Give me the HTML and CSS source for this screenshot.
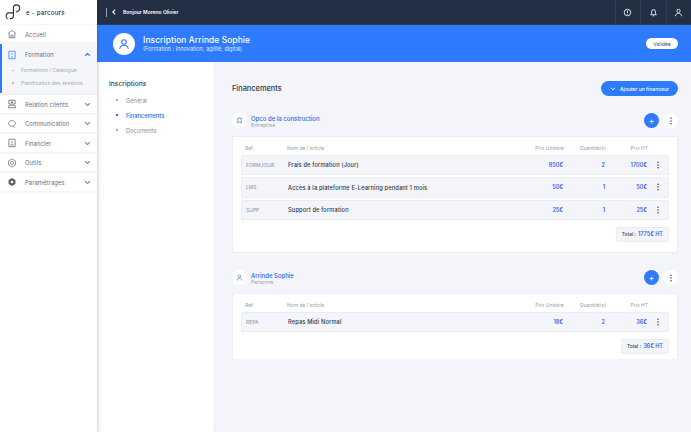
FILE: index.html
```html
<!DOCTYPE html>
<html lang="fr">
<head>
<meta charset="utf-8">
<title>Inscription Arrinde Sophie</title>
<link rel="stylesheet" href="styles.css">
</head>
<body>
<svg class="defs" width="0" height="0" aria-hidden="true">
  <symbol id="chev" viewBox="0 0 10 10"><path d="M2 3.5l3 3 3-3" fill="none" stroke="currentColor" stroke-width="1.5" stroke-linecap="round" stroke-linejoin="round"/></symbol>
  <symbol id="dots" viewBox="0 0 10 10"><circle cx="5" cy="1.5" r="1" fill="currentColor"/><circle cx="5" cy="5" r="1" fill="currentColor"/><circle cx="5" cy="8.5" r="1" fill="currentColor"/></symbol>
  <symbol id="user" viewBox="0 0 16 16"><circle cx="8" cy="5.2" r="3" fill="none" stroke="currentColor" stroke-width="1.4"/><path d="M2.5 14c.4-3 2.6-4.4 5.5-4.4s5.100 1.400 5.500 4.400" fill="none" stroke="currentColor" stroke-width="1.4" stroke-linecap="round"/></symbol>
</svg>
<div class="app">
  <aside class="sidebar">
    <div class="logo">
      <svg class="logo-mark" viewBox="0 0 18 18"><path d="M2.500 16.500c-2-2-1.500-5.500 1-6.500h6V4.500c0-2.200 1.500-3.500 3.500-3.500s3.500 1.500 3.500 3.500-1.500 4-4 4.500" fill="none" stroke="#2a3448" stroke-width="1.300" stroke-linecap="round"/><path d="M9.500 10v3c0 2-1.500 3.500-3.500 3.500" fill="none" stroke="#2a3448" stroke-width="1.300" stroke-linecap="round"/></svg>
      <span class="logo-text">e <b>-</b> parcours</span>
    </div>
    <nav class="nav">
      <a class="nav-row">
        <svg class="nav-icon" viewBox="0 0 16 16"><path d="M2 7l6-5 6 5M3.500 6v8h9V6M6.500 14v-4h3v4" fill="none" stroke="currentColor" stroke-width="1.100"/></svg>
        <span class="nav-label">Accueil</span>
      </a>
      <div class="nav-group">
        <a class="nav-row">
          <svg class="nav-icon blue" viewBox="0 0 16 16"><path d="M3 2h10v12H3z" fill="none" stroke="currentColor" stroke-width="1.200"/><path d="M8 5v3M6.500 11h3" stroke="currentColor" stroke-width="1.200"/></svg>
          <span class="nav-label">Formation</span>
          <svg class="chev up"><use href="#chev"/></svg>
        </a>
        <a class="sub-row">Formations / Catalogue</a>
        <a class="sub-row">Planification des sessions</a>
      </div>
      <a class="nav-row">
        <svg class="nav-icon" viewBox="0 0 16 16"><path d="M3 2h10v6H3zM2 14l1.500-4h9l1.500 4z" fill="none" stroke="currentColor" stroke-width="1.200"/><circle cx="8" cy="5" r="1.500" fill="currentColor"/></svg>
        <span class="nav-label">Relation clients</span>
        <svg class="chev"><use href="#chev"/></svg>
      </a>
      <a class="nav-row">
        <svg class="nav-icon" viewBox="0 0 16 16"><path d="M8 2.500c3.300 0 5.500 2 5.500 4.500s-2.200 4.500-5.500 4.500c-3.300 0-5.500-2-5.500-4.500s2.200-4.500 5.500-4.500zM10 11.500l2.500 2.500" fill="none" stroke="currentColor" stroke-width="1.100"/></svg>
        <span class="nav-label">Communication</span>
        <svg class="chev"><use href="#chev"/></svg>
      </a>
      <a class="nav-row">
        <svg class="nav-icon" viewBox="0 0 16 16"><path d="M3 2h10v12H3z" fill="none" stroke="currentColor" stroke-width="1.200"/><path d="M8 4.500v4M5.500 11h5" stroke="currentColor" stroke-width="1.200"/></svg>
        <span class="nav-label">Financier</span>
        <svg class="chev"><use href="#chev"/></svg>
      </a>
      <a class="nav-row">
        <svg class="nav-icon" viewBox="0 0 16 16"><path d="M8 1.500l5.500 3.200v6.600L8 14.500l-5.500-3.200V4.700z" fill="none" stroke="currentColor" stroke-width="1.100"/><circle cx="8" cy="8" r="2.500" fill="none" stroke="currentColor" stroke-width="1.100"/></svg>
        <span class="nav-label">Outils</span>
        <svg class="chev"><use href="#chev"/></svg>
      </a>
      <a class="nav-row">
        <svg class="nav-icon" viewBox="0 0 16 16"><path d="M8 1.500l5.500 3.200v6.600L8 14.500l-5.500-3.200V4.700z" fill="currentColor"/><circle cx="8" cy="8" r="2" fill="#fff"/></svg>
        <span class="nav-label">Paramétrages</span>
        <svg class="chev"><use href="#chev"/></svg>
      </a>
    </nav>
  </aside>

  <div class="main">
    <header class="topbar">
      <span class="top-rule"></span>
      <svg class="top-back" viewBox="0 0 10 10"><path d="M6.500 2L3.500 5l3 3" fill="none" stroke="currentColor" stroke-width="1.400"/></svg>
      <span class="greeting">Bonjour Moreno Olivier</span>
      <div class="top-icons">
        <span class="top-cell"><svg class="top-icon" viewBox="0 0 16 16"><circle cx="8" cy="8" r="5.800" fill="none" stroke="currentColor" stroke-width="1.500"/><path d="M8 4.500v4.500M8 10.500v1.200" stroke="currentColor" stroke-width="1.500"/></svg></span>
        <span class="top-cell"><svg class="top-icon" viewBox="0 0 16 16"><path d="M3 12h10l-1.500-2V6.500a3.500 3.500 0 0 0-7 0V10zM6.800 14h2.400" fill="none" stroke="currentColor" stroke-width="1.500"/></svg></span>
        <span class="top-cell"><svg class="top-icon"><use href="#user"/></svg></span>
      </div>
    </header>

    <section class="hero">
      <span class="hero-avatar"><svg class="hero-user"><use href="#user"/></svg></span>
      <div class="hero-text">
        <h1>Inscription Arrinde Sophie</h1>
        <p>(Formation : Innovation, agilité, digital)</p>
      </div>
      <span class="status">Validée</span>
    </section>

    <div class="body">
      <aside class="subnav">
        <h2>Inscriptions</h2>
        <a class="subnav-item">Général</a>
        <a class="subnav-item active">Financements</a>
        <a class="subnav-item">Documents</a>
      </aside>

      <main class="content">
        <div class="content-head">
          <h2>Financements</h2>
          <button class="add-btn"><svg class="add-chev"><use href="#chev"/></svg>Ajouter un financeur</button>
        </div>

        <section class="funder">
          <div class="funder-head">
            <span class="round"><svg class="round-icon" viewBox="0 0 16 16"><path d="M4 2.500h8v11l-4-2.500-4 2.500z" fill="none" stroke="currentColor" stroke-width="1.500"/></svg></span>
            <div class="funder-name"><strong>Opco de la construction</strong><span>Entreprise</span></div>
            <button class="plus">+</button>
            <span class="round"><svg class="dots"><use href="#dots"/></svg></span>
          </div>
          <div class="card">
            <div class="cols"><span>Ref.</span><span>Nom de l'article</span><span class="num">Prix Unitaire</span><span class="num">Quantité(s)</span><span class="num">Prix HT</span></div>
            <div class="line"><span class="ref">FORMJOUR</span><span class="name">Frais de formation (Jour)</span><span class="val">850€</span><span class="val">2</span><span class="val">1700€</span><svg class="dots"><use href="#dots"/></svg></div>
            <div class="line"><span class="ref">LMS</span><span class="name">Accès à la plateforme E-Learning pendant 1 mois</span><span class="val">50€</span><span class="val">1</span><span class="val">50€</span><svg class="dots"><use href="#dots"/></svg></div>
            <div class="line"><span class="ref">SUPP</span><span class="name">Support de formation</span><span class="val">25€</span><span class="val">1</span><span class="val">25€</span><svg class="dots"><use href="#dots"/></svg></div>
            <div class="total-wrap"><span class="total">Total : <b>1775€ HT</b></span></div>
          </div>
        </section>

        <section class="funder">
          <div class="funder-head">
            <span class="round"><svg class="round-icon"><use href="#user"/></svg></span>
            <div class="funder-name"><strong>Arrinde Sophie</strong><span>Personne</span></div>
            <button class="plus">+</button>
            <span class="round"><svg class="dots"><use href="#dots"/></svg></span>
          </div>
          <div class="card cut">
            <div class="cols"><span>Ref.</span><span>Nom de l'article</span><span class="num">Prix Unitaire</span><span class="num">Quantité(s)</span><span class="num">Prix HT</span></div>
            <div class="line"><span class="ref">REPA</span><span class="name">Repas Midi Normal</span><span class="val">18€</span><span class="val">2</span><span class="val">36€</span><svg class="dots"><use href="#dots"/></svg></div>
            <div class="total-wrap"><span class="total">Total : <b>36€ HT</b></span></div>
          </div>
        </section>
      </main>
    </div>
  </div>
</div>
</body>
</html>
```

FILE: styles.css
```css
* { box-sizing: border-box; }
html, body { margin: 0; height: 100%; overflow: hidden; }
body { font-family: "Inter", "Lato", sans-serif; color: #2a3448; background: #fff; }
.defs { display: block; height: 0; }
h1, h2, p { margin: 0; font-weight: 400; }
button { font: inherit; border: 0; padding: 0; }

.app { display: flex; width: 691px; height: 432px; }

.sidebar { width: 97px; flex: none; background: #fff; box-shadow: 1px 0 3px rgba(40, 50, 70, .18); position: relative; z-index: 2; }
.logo { height: 24px; display: flex; align-items: center; padding-left: 5px; gap: 5px; }
.logo-mark { width: 16px; height: 16px; flex: none; }
.logo-text { font-size: 6.200px; letter-spacing: .2px; font-weight: 500; color: #2a3448; }
.logo-text b { color: #2e7bff; }
.nav { display: flex; flex-direction: column; }
.nav-row { height: 19.500px; display: flex; align-items: center; padding: 1px 6px 0 7px; border-bottom: 2px solid #f4f4f6; background: #fff; color: #7b818c; }
.nav-row:first-child { border-top: 1px solid #f4f4f6; height: 20px; }
.nav-group { background: #f5f6fa; box-shadow: inset 2px 0 0 #2e7bff; height: 51px; border-bottom: 2px solid #f0f1f4; }
.nav-group .nav-row { background: transparent; border: 0; height: 20px; padding-top: 1px; }
.nav-icon { width: 10px; height: 10px; flex: none; color: #5b6270; margin-right: 8px; }
.nav-icon.blue { color: #2e7bff; }
.nav-label { font-size: 5.800px; letter-spacing: .12px; flex: 1; white-space: nowrap; color: #666c78; }
.chev { width: 7px; height: 7px; color: #7b818c; flex: none; }
.chev.up { transform: rotate(180deg); color: #2e7bff; }
.sub-row { display: flex; align-items: center; height: 13px; padding-left: 21px; font-size: 4.900px; letter-spacing: .08px; color: #a3a8b1; white-space: nowrap; position: relative; margin-top: -.5px; }
.sub-row::before { content: ""; position: absolute; left: 12px; top: 6px; width: 1.500px; height: 1.500px; background: #b6bac2; }

.main { flex: 1; min-width: 0; display: flex; flex-direction: column; }
.topbar { height: 24px; flex: none; background: #232f42; color: #fff; display: flex; align-items: center; padding-left: 9px; }
.top-rule { width: 1px; height: 9px; background: #9aa2ae; }
.top-back { width: 8px; height: 8px; margin-left: 3px; color: #fff; }
.greeting { margin-left: 5px; font-size: 5px; font-weight: 600; }
.top-icons { margin-left: auto; display: flex; height: 100%; }
.top-cell { width: 25.500px; display: flex; align-items: center; justify-content: center; border-left: 1px solid #313d50; }
.top-icon { width: 9px; height: 9px; color: #fff; }

.hero { height: 38px; flex: none; background: #2e7bff; display: flex; align-items: center; padding: 0 13px 0 16px; color: #fff; border-top: 1px solid #2a3a5e; }
.hero-avatar { width: 22px; height: 22px; border-radius: 50%; background: #fff; display: flex; align-items: center; justify-content: center; color: #2e7bff; }
.hero-user { width: 12px; height: 12px; }
.hero-text { margin-left: 8px; flex: 1; }
.hero h1 { font-size: 8.400px; font-weight: 500; line-height: 10px; letter-spacing: .1px; }
.hero p { font-size: 5.500px; line-height: 7px; margin-top: 1px; color: #dce8ff; }
.status { width: 32px; height: 11px; border-radius: 6px; background: #fff; color: #444b58; font-size: 5px; display: flex; align-items: center; justify-content: center; }

.body { flex: 1; display: flex; min-height: 0; }
.subnav { width: 118px; flex: none; background: #fff; padding: 17.500px 0 0 12px; box-shadow: inset 4px 0 4px -3px rgba(40, 50, 70, .08); border-right: 1px solid #ecedf0; }
.subnav h2 { font-size: 6.700px; font-weight: 500; color: #3a4252; margin-bottom: 4px; line-height: 9px; }
.subnav-item { display: flex; align-items: center; height: 15px; padding-left: 17px; font-size: 5.700px; color: #8b909a; position: relative; white-space: nowrap; }
.subnav-item::before { content: ""; position: absolute; left: 7px; top: 6.500px; width: 2px; height: 2px; background: #a8acb4; }
.subnav-item.active { color: #2e68f0; font-weight: 500; }
.subnav-item.active::before { background: #2e68f0; }

.content { flex: 1; min-width: 0; background: #f4f5fa; padding: 19px 13px 0 17px; overflow: hidden; }
.content-head { display: flex; align-items: center; justify-content: space-between; height: 15px; margin-bottom: 17px; }
.content-head h2 { font-size: 7.400px; font-weight: 500; color: #2f3747; }
.add-btn { width: 77px; height: 15px; border-radius: 8px; background: #2e7bff; color: #fff; font-size: 5px; font-weight: 500; display: flex; align-items: center; justify-content: center; gap: 4px; white-space: nowrap; }
.add-chev { width: 6px; height: 6px; }

.funder { margin-bottom: 17px; }
.funder-head { display: flex; align-items: center; height: 15px; margin-bottom: 7.500px; }
.round { width: 15px; height: 15px; border-radius: 50%; background: #fff; display: flex; align-items: center; justify-content: center; color: #2e68f0; flex: none; }
.round-icon { width: 7px; height: 7px; }
.funder-name { flex: 1; margin-left: 4px; display: flex; flex-direction: column; margin-top: 1px; }
.funder-name strong { font-size: 6px; font-weight: 500; color: #2e68f0; line-height: 7px; }
.funder-name span { font-size: 5px; color: #9ea3ac; line-height: 6px; }
.plus { width: 15px; height: 15px; border-radius: 50%; background: #2e7bff; color: #fff; font-size: 8px; line-height: 14px; font-weight: 600; margin-right: 4px; text-align: center; }
.dots { width: 8px; height: 8px; color: #4a5160; flex: none; }
.round .dots { color: #4a5160; }

.card { background: #fff; border: 1px solid #ecedf3; border-radius: 2px; padding: 5px 8px 5px; height: 117.500px; }
.card.cut { height: 66.500px; border-bottom: 0; border-radius: 2px 2px 0 0; }
.cols { display: grid; grid-template-columns: 42px 1fr 40px 42px 42px 21px; padding-left: 4px; height: 13px; align-items: center; font-size: 5px; color: #9a9fa8; }
.num { text-align: right; }
.line { display: grid; grid-template-columns: 42px 1fr 40px 42px 42px 21px; padding-left: 4px; height: 20.500px; margin-bottom: 2px; align-items: center; background: #f4f5fa; border: 1px solid #ebecf1; border-radius: 2px; }
.line .dots { justify-self: center; }
.ref { font-size: 5px; color: #8f949d; }
.name { font-size: 5.700px; font-weight: 500; color: #2f3747; letter-spacing: .14px; white-space: nowrap; }
.val { font-size: 5.500px; font-weight: 600; color: #2e68f0; text-align: right; }
.total-wrap { display: flex; justify-content: flex-end; margin-top: 6.500px; }
.total { height: 15px; padding: 0 5px; display: flex; align-items: center; gap: 2px; background: #f4f5fa; border: 1px solid #ebecf1; border-radius: 2px; font-size: 4.900px; color: #3b4252; font-weight: 500; }
.total b { color: #2e68f0; font-size: 5.500px; font-weight: 600; }
```
